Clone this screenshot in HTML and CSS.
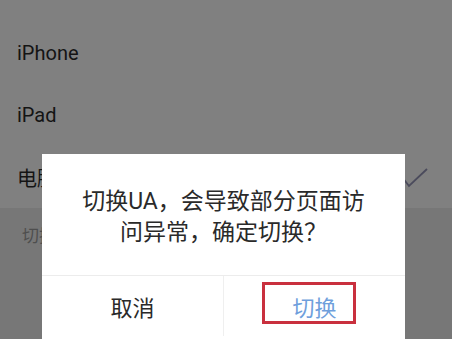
FILE: index.html
```html
<!DOCTYPE html>
<html lang="zh-CN">
<head>
<meta charset="utf-8">
<title>UA</title>
<link rel="stylesheet" href="styles.css">
</head>
<body>
<div class="page">
  <ul class="list">
    <li class="item first">Android（默认）</li>
    <li class="item">iPhone</li>
    <li class="item">iPad</li>
    <li class="item">电脑
      <svg class="check" width="28" height="22" viewBox="0 0 28 22"><path d="M1 10 L8 19 L26 2" fill="none" stroke="#4b4b5c" stroke-width="1.8"/></svg>
    </li>
  </ul>
  <div class="hint">切换UA后部分网页可能显示异常</div>
</div>
<div class="dialog">
  <div class="msg">切换UA，会导致部分页面访<br>问异常，确定切换？</div>
  <div class="actions">
    <div class="btn">取消</div>
    <div class="btn primary">切换<span class="mark"></span></div>
  </div>
</div>
</body>
</html>
```
FILE: styles.css
```css
html, body {
  margin: 0;
  padding: 0;
  width: 452px;
  height: 339px;
  overflow: hidden;
  background: #808080;
  font-family: Roboto, "Noto Sans CJK SC", sans-serif;
}
.page {
  margin-top: -40px;
}
.list {
  list-style: none;
  margin: 0;
  padding: 0;
}
.item {
  height: 62px;
  box-sizing: border-box;
  display: flex;
  align-items: center;
  justify-content: space-between;
  padding: 0 23px 0 17px;
  font-size: 20px;
  color: #141414;
}
.first {
  padding-bottom: 6px;
}
.check {
  margin-top: 2px;
}
.hint {
  background: #777777;
  padding: 14px 22px;
  font-size: 17px;
  color: #4e4e4e;
  height: 140px;
}
.dialog {
  position: absolute;
  left: 42px;
  top: 154px;
  width: 363px;
  height: 200px;
  background: #ffffff;
}
.msg {
  padding: 32px 0 27px;
  text-align: center;
  font-size: 23px;
  line-height: 31px;
  color: #2a2a2a;
  border-bottom: 1px solid #ececec;
}
.actions {
  display: flex;
  height: 60px;
}
.btn {
  flex: 1;
  display: flex;
  align-items: center;
  justify-content: center;
  font-size: 22px;
  color: #2a2a2a;
  position: relative;
}
.btn + .btn {
  border-left: 1px solid #efefef;
}
.primary {
  color: #6f9fdc;
}
.mark {
  position: absolute;
  left: 38px;
  top: 6px;
  width: 94px;
  height: 42px;
  box-sizing: border-box;
  border: 3px solid #c9303e;
}
```
